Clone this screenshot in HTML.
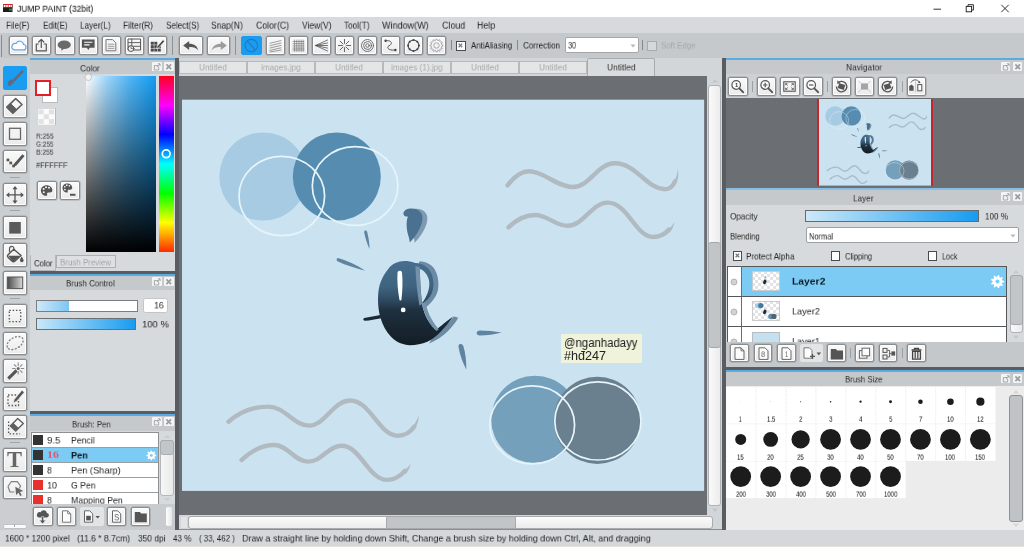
<!DOCTYPE html>
<html><head><meta charset="utf-8"><title>JUMP PAINT (32bit)</title>
<style>

*{box-sizing:border-box;margin:0;padding:0}
html,body{width:1024px;height:547px;overflow:hidden;background:#d7dadc;font-family:"Liberation Sans",sans-serif;font-size:9.6px;color:#222}
.a{position:absolute}
.t{position:absolute;white-space:pre;line-height:1;transform-origin:0 50%;will-change:transform}
.b{background:linear-gradient(#fafafa,#ebebec);border:1px solid #898c8f;border-radius:2px;box-shadow:0 0 0 .6px rgba(125,128,132,.55),inset 0 0 0 1px #fff}
.b svg,.bon svg,.bf svg{display:block}
.bon{background:#1a9df0;border:1px solid #1a9df0;border-radius:2px}
.bf{border:1px solid #e2e4e6;background:#e2e4e6;border-radius:2px}
.sep{position:absolute;width:1px;background:#8f9295}
.pt{position:absolute;background:#c6c9cb;border-top:2px solid #58ace3}
.pb{position:absolute;width:9.5px;height:9.5px;background:#f3f4f5;border-radius:1px}
.pb svg{display:block}
.chk{position:absolute;width:9.5px;height:9.5px;background:#fff;border:1px solid #4a4d50}

</style></head><body>
<div class="a" style="left:0px;top:0px;width:1024px;height:17px;background:#fff"></div>
<svg class="a" style="left:3px;top:4px;" width="9.5" height="8" viewBox="0 0 9.5 8"><rect width="9.5" height="8" fill="#1c1c1c"/><rect width="9.5" height="3.6" fill="#d3222a"/><rect x="0.8" y="1" width="1.6" height="2" fill="#fff"/><rect x="3.2" y="1" width="1.6" height="2" fill="#fff"/><rect x="5.6" y="1" width="1.6" height="2" fill="#fff"/><rect x="7.6" y="1" width="1.2" height="2" fill="#fff"/><rect x="6" y="4.6" width="3" height="2" fill="#1f8a3b"/></svg>
<span class="t" style="left:17.00px;top:4.83px;font-size:9px;color:#000;transform:scale(0.9462,1.0500);">JUMP PAINT (32bit)</span>
<svg class="a" style="left:925px;top:0px;" width="99" height="17" viewBox="0 0 99 17"><g stroke="#1a1a1a" stroke-width="0.9" fill="none"><path d="M8.5 9.2h7.5"/><rect x="41.2" y="6.4" width="5.4" height="5.4"/><path d="M43 6.4v-1.7h5.4v5.4h-1.8"/><path d="M76.3 4.8l7.4 7.4M83.7 4.8l-7.4 7.4"/></g></svg>
<div class="a" style="left:0px;top:17px;width:1024px;height:16px;background:#d7dadd"></div>
<span class="t" style="left:6.25px;top:20.98px;font-size:10px;color:#1e1e1e;transform:scale(0.8082,0.8750);">File(F)</span>
<span class="t" style="left:42.50px;top:20.98px;font-size:10px;color:#1e1e1e;transform:scale(0.8049,0.8750);">Edit(E)</span>
<span class="t" style="left:80.00px;top:20.98px;font-size:10px;color:#1e1e1e;transform:scale(0.8215,0.8750);">Layer(L)</span>
<span class="t" style="left:123.00px;top:20.98px;font-size:10px;color:#1e1e1e;transform:scale(0.8308,0.8750);">Filter(R)</span>
<span class="t" style="left:165.50px;top:20.98px;font-size:10px;color:#1e1e1e;transform:scale(0.8085,0.8750);">Select(S)</span>
<span class="t" style="left:211.25px;top:20.98px;font-size:10px;color:#1e1e1e;transform:scale(0.8523,0.8750);">Snap(N)</span>
<span class="t" style="left:256.00px;top:20.98px;font-size:10px;color:#1e1e1e;transform:scale(0.8734,0.8750);">Color(C)</span>
<span class="t" style="left:301.50px;top:20.98px;font-size:10px;color:#1e1e1e;transform:scale(0.8470,0.8750);">View(V)</span>
<span class="t" style="left:343.50px;top:20.98px;font-size:10px;color:#1e1e1e;transform:scale(0.8193,0.8750);">Tool(T)</span>
<span class="t" style="left:382.25px;top:20.98px;font-size:10px;color:#1e1e1e;transform:scale(0.9047,0.8750);">Window(W)</span>
<span class="t" style="left:441.50px;top:20.98px;font-size:10px;color:#1e1e1e;transform:scale(0.8894,0.8750);">Cloud</span>
<span class="t" style="left:477.25px;top:20.98px;font-size:10px;color:#1e1e1e;transform:scale(0.8869,0.8750);">Help</span>
<div class="a" style="left:0px;top:33px;width:1024px;height:25px;background:#c6c9cc"></div>
<div class="a" style="left:1.2px;top:34.5px;width:1.3px;height:22.5px;background:#8a8d90"></div>
<div class="a b" style="left:8.5px;top:35.7px;width:19.2px;height:19px"><svg width="17.2" height="17" viewBox="0 0 17.2 17"><path d="M4.400 12.900h8.800a2.700 2.700 0 0 0 .3-5.400 3.900 3.900 0 0 0-7.400-1 3.300 3.300 0 0 0-1.700 6.400z" fill="#fff" stroke="#69a7e2" stroke-width="1.200"/></svg></div>
<div class="a b" style="left:32.1px;top:35.7px;width:19.2px;height:19px"><svg width="17.2" height="17" viewBox="0 0 17.2 17"><g fill="none" stroke="#555" stroke-width="1.1" stroke-linecap="round" stroke-linejoin="round"><path d="M5.300 7H3.300v6.800h10V7h-2M8.300 10.400V2.600M5.700 5l2.600-2.600L10.900 5" stroke-width="1.200"/></g></svg></div>
<div class="a b" style="left:55.4px;top:35.7px;width:19.2px;height:19px"><svg width="17.2" height="17" viewBox="0 0 17.2 17"><ellipse cx="8.200" cy="7.700" rx="6.600" ry="4.300" fill="#6a6a6a"/><path d="M5.600 10.800l-.3 3 3.200-2.400z" fill="#6a6a6a"/></svg></div>
<div class="a b" style="left:78.5px;top:35.7px;width:19.2px;height:19px"><svg width="17.2" height="17" viewBox="0 0 17.2 17"><path d="M1.900 2.500h12.700v8.200H9.800L8.300 12.900 6.800 10.700H1.900z" fill="#555"/><path d="M4.200 5.300h8.200M4.200 7.900h5.400" stroke="#fff" stroke-width="1.100"/></svg></div>
<div class="a b" style="left:101.6px;top:35.7px;width:19.2px;height:19px"><svg width="17.2" height="17" viewBox="0 0 17.2 17"><g fill="none" stroke="#555" stroke-width="1.1" stroke-linecap="round" stroke-linejoin="round"><path d="M3.400 2.600h6.200l3.200 3.200v8H3.400z" stroke-width="1" stroke="#777"/><path d="M5.300 7.200h5.600M5.300 9.300h5.600M5.300 11.400h5.600" stroke-width=".8" stroke="#888"/></g></svg></div>
<div class="a b" style="left:124.8px;top:35.7px;width:19.2px;height:19px"><svg width="17.2" height="17" viewBox="0 0 17.2 17"><g fill="none" stroke="#555" stroke-width="1.1" stroke-linecap="round" stroke-linejoin="round"><rect x="2.400" y="2" width="12.200" height="11" stroke-width="1"/><path d="M2.400 5.600h12.200M2.400 9.300h12.200M5.800 2v11" stroke-width=".9"/><circle cx="5" cy="11.600" r="2.900" fill="#f4f4f4" stroke-width="1"/><path d="M5 10v1.600h1.400" stroke-width=".8"/></g></svg></div>
<div class="a b" style="left:148.1px;top:35.7px;width:19.2px;height:19px"><svg width="17.2" height="17" viewBox="0 0 17.2 17"><g fill="#4a4a4a"><rect x="1.800" y="4.800" width="3" height="2.900"/><rect x="5.300" y="4.800" width="3" height="2.900"/><rect x="1.800" y="8.200" width="3" height="2.900"/><rect x="5.300" y="8.200" width="3" height="2.900"/><rect x="8.800" y="8.200" width="3" height="2.900"/><rect x="1.800" y="11.600" width="3" height="2.900"/><rect x="5.300" y="11.600" width="3" height="2.900"/><rect x="8.800" y="11.600" width="3" height="2.900"/></g><path d="M8.200 9.300l5.800-6.600 1.700 1.500-5.800 6.600-2.400.9z" fill="#4a4a4a" stroke="#f4f4f4" stroke-width=".7"/></svg></div>
<div class="sep" style="left:171.6px;top:35.5px;height:19.5px"></div>
<div class="a b" style="left:179px;top:35.7px;width:23.6px;height:19px"><svg width="21.6" height="17" viewBox="0 0 21.6 17"><path d="M3.2 8.6l6-4.6v2.7c5.2 0 8 2.2 9 6.5-2.4-2.7-5-3.3-9-3.1v3z" fill="#555"/></svg></div>
<div class="a b" style="left:206.6px;top:35.7px;width:23.6px;height:19px"><svg width="21.6" height="17" viewBox="0 0 21.6 17"><path d="M18.8 8.6l-6-4.6v2.7c-5.2 0-8 2.2-9 6.5 2.4-2.7 5-3.3 9-3.1v3z" fill="#9a9c9e"/></svg></div>
<div class="sep" style="left:234.8px;top:35.5px;height:19.5px"></div>
<div class="a bon" style="left:241.4px;top:35.7px;width:20.2px;height:19px"><svg width="18.2" height="17" viewBox="0 0 18.2 17"><circle cx="9.3" cy="8.6" r="6.2" fill="none" stroke="#2277c0" stroke-width="1.1"/><path d="M5.2 4l8.4 9.2" stroke="#2277c0" stroke-width="1.1"/></svg></div>
<div class="a b" style="left:265.5px;top:35.7px;width:19.2px;height:19px"><svg width="17.2" height="17" viewBox="0 0 17.2 17"><g fill="none" stroke="#555" stroke-width="1.1" stroke-linecap="round" stroke-linejoin="round"><path d="M3 6.2l11-2.6M3 8.6l11-2.6M3 11l11-2.6M3 13.400l11-2.600M3 15l11-2" stroke-width=".7" stroke="#777"/></g></svg></div>
<div class="a b" style="left:288.6px;top:35.7px;width:19.2px;height:19px"><svg width="17.2" height="17" viewBox="0 0 17.2 17"><g fill="none" stroke="#555" stroke-width="1.1" stroke-linecap="round" stroke-linejoin="round"><path d="M3 4.5h11M3 6.7h11M3 8.9h11M3 11.1h11M3 13h11M4.6 3v11.4M6.8 3v11.4M9 3v11.4M11.2 3v11.4M13.2 3v11.4" stroke-width=".6" stroke="#666"/></g></svg></div>
<div class="a b" style="left:311.5px;top:35.7px;width:19.2px;height:19px"><svg width="17.2" height="17" viewBox="0 0 17.2 17"><g fill="none" stroke="#555" stroke-width="1.1" stroke-linecap="round" stroke-linejoin="round"><path d="M2.6 8.5L14.6 3M2.6 8.5l12-2.6M2.6 8.5h12M2.6 8.5l12 2.6M2.6 8.5l12 5.5" stroke-width=".8"/></g></svg></div>
<div class="a b" style="left:334.6px;top:35.7px;width:19.2px;height:19px"><svg width="17.2" height="17" viewBox="0 0 17.2 17"><g fill="none" stroke="#555" stroke-width="1.1" stroke-linecap="round" stroke-linejoin="round"><path d="M8.5 2.4v4M8.5 10.6v4M2.4 8.5h4M10.6 8.5h4M4.2 4.2L7 7M10 10l2.8 2.8M12.8 4.2L10 7M7 10l-2.8 2.8" stroke-width=".9"/></g></svg></div>
<div class="a b" style="left:357.6px;top:35.7px;width:19.2px;height:19px"><svg width="17.2" height="17" viewBox="0 0 17.2 17"><g fill="none" stroke="#555" stroke-width="1.1" stroke-linecap="round" stroke-linejoin="round"><circle cx="8.5" cy="8.5" r="6" stroke-width=".8"/><circle cx="8.5" cy="8.5" r="3.9" stroke-width=".8"/><circle cx="8.5" cy="8.5" r="1.8" stroke-width=".8"/></g></svg></div>
<div class="a b" style="left:380.7px;top:35.7px;width:19.2px;height:19px"><svg width="17.2" height="17" viewBox="0 0 17.2 17"><g fill="none" stroke="#555" stroke-width="1.1" stroke-linecap="round" stroke-linejoin="round"><path d="M3.6 3.8c7-1 7 3.4 3.4 5-3 1.6-.5 5.2 6.4 4.2" stroke-width="1"/></g><circle cx="3.6" cy="3.8" r="1.2" fill="#444"/><circle cx="13.4" cy="13" r="1.2" fill="#444"/></svg></div>
<div class="a b" style="left:403.9px;top:35.7px;width:19.2px;height:19px"><svg width="17.2" height="17" viewBox="0 0 17.2 17"><g fill="none" stroke="#555" stroke-width="1.1" stroke-linecap="round" stroke-linejoin="round"><circle cx="8.5" cy="8.5" r="5.4" stroke-width="1.2"/></g><circle cx="13.9" cy="8.5" r="1" fill="#444"/><circle cx="12.3" cy="12.3" r="1" fill="#444"/><circle cx="8.5" cy="13.9" r="1" fill="#444"/><circle cx="4.7" cy="12.3" r="1" fill="#444"/><circle cx="3.1" cy="8.5" r="1" fill="#444"/><circle cx="4.7" cy="4.7" r="1" fill="#444"/><circle cx="8.5" cy="3.1" r="1" fill="#444"/><circle cx="12.3" cy="4.7" r="1" fill="#444"/></svg></div>
<div class="a b" style="left:427.2px;top:35.7px;width:19.2px;height:19px"><svg width="17.2" height="17" viewBox="0 0 17.2 17"><polygon points="14.89,8.08 14.89,8.92 13.52,9.50 13.35,10.15 14.24,11.33 13.82,12.06 12.35,11.88 11.88,12.35 12.06,13.82 11.33,14.24 10.15,13.35 9.50,13.52 8.92,14.89 8.08,14.89 7.50,13.52 6.85,13.35 5.67,14.24 4.94,13.82 5.12,12.35 4.65,11.88 3.18,12.06 2.76,11.33 3.65,10.15 3.48,9.50 2.11,8.92 2.11,8.08 3.48,7.50 3.65,6.85 2.76,5.67 3.18,4.94 4.65,5.12 5.12,4.65 4.94,3.18 5.67,2.76 6.85,3.65 7.50,3.48 8.08,2.11 8.92,2.11 9.50,3.48 10.15,3.65 11.33,2.76 12.06,3.18 11.88,4.65 12.35,5.12 13.82,4.94 14.24,5.67 13.35,6.85 13.52,7.50" fill="none" stroke="#9c9ea0" stroke-width=".9" stroke-linejoin="round"/><circle cx="8.5" cy="8.5" r="2.688" fill="none" stroke="#9c9ea0" stroke-width=".9"/></svg></div>
<div class="sep" style="left:451px;top:40.300px;height:9.500px;background:#85888b"></div>
<div class="chk" style="left:456px;top:41px"></div>
<svg class="a" style="left:456px;top:41px;" width="9.5" height="9.5" viewBox="0 0 9.5 9.5"><path d="M2.600 2.600l3.600 3.600M6.200 2.600L2.600 6.200" stroke="#777" stroke-width="1.300"/></svg>
<span class="t" style="left:470.60px;top:41.43px;font-size:10px;color:#222;transform:scale(0.7883,0.8250);">AntiAliasing</span>
<div class="sep" style="left:516.6px;top:40.300px;height:9.500px;background:#85888b"></div>
<span class="t" style="left:522.90px;top:41.43px;font-size:10px;color:#222;transform:scale(0.8041,0.8250);">Correction</span>
<div class="a" style="left:565.4px;top:36.8px;width:73.2px;height:16px;background:#fff;border:1px solid #a4a7aa;border-radius:2px"></div>
<span class="t" style="left:568.20px;top:41.23px;font-size:10px;color:#222;transform:scale(0.7371,0.8250);">30</span>
<svg class="a" style="left:629.5px;top:43.5px;" width="6" height="4" viewBox="0 0 6 4"><path d="M0.500.5h5L3 3.500z" fill="#b5b7b9"/></svg>
<div class="sep" style="left:641.5px;top:40.300px;height:9.500px;background:#85888b"></div>
<div class="chk" style="left:647.4px;top:41px;border-color:#a8abad;background:#d6d9db"></div>
<span class="t" style="left:661.20px;top:41.43px;font-size:10px;color:#a6a9ab;transform:scale(0.7878,0.8250);">Soft Edge</span>
<div class="a" style="left:0px;top:57.8px;width:29.6px;height:1.2px;background:#85888b"></div>
<div class="a" style="left:0px;top:530px;width:1024px;height:17px;background:#d5d8da"></div>
<div class="a" style="left:0px;top:545.6px;width:1024px;height:1.4px;background:#e6e2da"></div>
<span class="t" style="left:5.00px;top:534.43px;font-size:10px;color:#222;transform:scale(0.8370,0.8250);">1600 * 1200 pixel</span>
<span class="t" style="left:77.00px;top:534.43px;font-size:10px;color:#222;transform:scale(0.8556,0.8250);">(11.6 * 8.7cm)</span>
<span class="t" style="left:137.80px;top:534.43px;font-size:10px;color:#222;transform:scale(0.8381,0.8250);">350 dpi</span>
<span class="t" style="left:173.30px;top:534.43px;font-size:10px;color:#222;transform:scale(0.8027,0.8250);">43 %</span>
<span class="t" style="left:199.20px;top:534.43px;font-size:10px;color:#222;transform:scale(0.7852,0.8250);">( 33, 462 )</span>
<span class="t" style="left:242.40px;top:534.43px;font-size:10px;color:#222;transform:scale(0.8988,0.8250);">Draw a straight line by holding down Shift, Change a brush size by holding down Ctrl, Alt, and dragging</span>
<div class="a" style="left:0px;top:58px;width:30px;height:472px;background:#cbced1"></div>
<div class="a bon" style="left:2.8px;top:66.3px;width:24px;height:23.6px"><svg width="22" height="21.6" viewBox="0 0 22 21.6"><path d="M18.200 4.600L10 13.400" stroke="#5d6b80" stroke-width="2.500" stroke-linecap="round"/><ellipse cx="6.800" cy="15.500" rx="3.300" ry="2.300" transform="rotate(-38 6.800 15.500)" fill="#5d6b80"/><path d="M3.400 18.400c1.300-.2 2-1 2.400-2l1.500 1.600c-1.100.8-2.400 1-3.900.4z" fill="#5d6b80"/></svg></div>
<div class="a b" style="left:2.8px;top:94.5px;width:24px;height:23.6px"><svg width="22" height="21.6" viewBox="0 0 22 21.6"><path d="M11.700 2.700L18 8.500 8.900 17.200 2.800 11.200z" fill="#f8f8f8" stroke="#5f5f5f" stroke-width="1.600" stroke-linejoin="round"/><path d="M2.800 11.200L6.500 7.600 12.700 13.500 8.900 17.200z" fill="#5f5f5f" stroke="#5f5f5f" stroke-width="1" stroke-linejoin="round"/></svg></div>
<div class="a b" style="left:2.8px;top:122.4px;width:24px;height:23.6px"><svg width="22" height="21.6" viewBox="0 0 22 21.6"><rect x="5.500" y="5.300" width="11" height="11" fill="#f2f2f2" stroke="#666" stroke-width="1.300"/></svg></div>
<div class="a b" style="left:2.8px;top:149.8px;width:24px;height:23.6px"><svg width="22" height="21.6" viewBox="0 0 22 21.6"><path d="M18.400 3.200l2.200 1.900-8.200 9.500-3.400 1.400 1.200-3.400z" fill="#555"/><g fill="#555"><rect x="2.600" y="7.600" width="2.700" height="2.700"/><rect x="5.400" y="10.600" width="2.700" height="2.700"/><rect x="8.200" y="13.600" width="2.700" height="2.700"/></g></svg></div>
<div class="a b" style="left:2.8px;top:182.8px;width:24px;height:23.6px"><svg width="22" height="21.6" viewBox="0 0 22 21.6"><g stroke="#555" stroke-width="1.300" fill="none"><path d="M11 3.500v14.800M3.600 10.900h14.800"/></g><g fill="#555"><path d="M11 2l2.600 3.200H8.400zM11 19.800l2.600-3.200H8.400zM2.100 10.900l3.200-2.600v5.200zM19.900 10.900l-3.200-2.600v5.200z"/></g></svg></div>
<div class="a b" style="left:2.8px;top:215.6px;width:24px;height:23.6px"><svg width="22" height="21.6" viewBox="0 0 22 21.6"><rect x="5.200" y="5" width="11.600" height="11.600" fill="#5a5a5a"/></svg></div>
<div class="a b" style="left:2.8px;top:243.3px;width:24px;height:23.6px"><svg width="22" height="21.6" viewBox="0 0 22 21.6"><path d="M9.800 5.200l7.200 6.300-6 5.500c-1 .9-2.200.9-3.100 0L4.200 13.400c-.8-.8-.8-2 .1-2.900z" fill="none" stroke="#555" stroke-width="1.400"/><path d="M4.300 11.800h12l-5.600 5c-.9.800-1.900.8-2.700 0z" fill="#555"/><path d="M9.900 6.500V4.600c0-1.500-1-2.300-2.200-2.300S5.500 3.200 5.500 4.700v3.200" fill="none" stroke="#555" stroke-width="1.200"/><path d="M17.600 12.400c1.400 2 2 3 2 4a1.800 1.800 0 0 1-3.600 0c0-1 .5-2.200 1.600-4z" fill="#555"/></svg></div>
<div class="a b" style="left:2.8px;top:271.4px;width:24px;height:23.6px"><svg width="22" height="21.6" viewBox="0 0 22 21.6"><defs><linearGradient id="tg" x1="0" x2="1"><stop offset="0" stop-color="#4a4a4a"/><stop offset="1" stop-color="#d8d8d8"/></linearGradient></defs><rect x="3.300" y="5" width="15.400" height="11.600" fill="url(#tg)" stroke="#555" stroke-width="1"/></svg></div>
<div class="a b" style="left:2.8px;top:304.2px;width:24px;height:23.6px"><svg width="22" height="21.6" viewBox="0 0 22 21.6"><rect x="5.300" y="5.300" width="11.400" height="11.400" fill="none" stroke="#555" stroke-width="1.300" stroke-dasharray="1.500 1.800"/></svg></div>
<div class="a b" style="left:2.8px;top:331.8px;width:24px;height:23.6px"><svg width="22" height="21.6" viewBox="0 0 22 21.6"><path d="M3.600 14.500C1.500 10 7 4.500 13.500 3.600c5.500-.7 7 3.500 4.500 7.400-3 4.600-12.500 8-14.400 3.500z" fill="none" stroke="#7d7d7d" stroke-width="1.300" stroke-dasharray="2 1.500"/></svg></div>
<div class="a b" style="left:2.8px;top:359.4px;width:24px;height:23.6px"><svg width="22" height="21.6" viewBox="0 0 22 21.6"><path d="M3.200 17.600l8.300-8.300 2.200 2.200-8.300 8.300z" fill="#555"/><g stroke="#8a8a8a" stroke-width="1.100"><path d="M14.200 2.600v3.400M14.200 11V14.400M8.200 8.500h3.400M16.800 8.500h3.400M10 4.300l2.400 2.400M16 10.300l2.400 2.400M18.400 4.300L16 6.700"/></g><circle cx="14.200" cy="8.500" r="1.500" fill="#666"/></svg></div>
<div class="a b" style="left:2.8px;top:387.2px;width:24px;height:23.6px"><svg width="22" height="21.6" viewBox="0 0 22 21.6"><rect x="4" y="7" width="10.500" height="10.500" fill="none" stroke="#555" stroke-width="1.300" stroke-dasharray="1.500 1.800"/><path d="M18 2.200l2.300 2-7.800 9.200-3.400 1.400 1.200-3.400z" fill="#555" stroke="#f4f4f4" stroke-width=".6"/></svg></div>
<div class="a b" style="left:2.8px;top:415px;width:24px;height:23.6px"><svg width="22" height="21.6" viewBox="0 0 22 21.6"><path d="M4.600 5.500v12.300h11.500" fill="none" stroke="#555" stroke-width="1.300" stroke-dasharray="1.500 1.800"/><path d="M13.700 2.600l5.600 5-7.600 7.400-5.400-5z" fill="#f8f8f8" stroke="#5f5f5f" stroke-width="1.400" stroke-linejoin="round"/><path d="M6.300 10l3.100-3 5.400 5-3.100 3z" fill="#5f5f5f"/></svg></div>
<div class="a b" style="left:2.8px;top:448px;width:24px;height:23.6px"><svg width="22" height="21.6" viewBox="0 0 22 21.6"></svg></div>
<span class="t" style="left:7.29px;top:449.10px;font-size:22.5px;color:#666;font-weight:700;font-family:'Liberation Serif',serif;">T</span>
<div class="a b" style="left:2.8px;top:475.8px;width:24px;height:23.6px"><svg width="22" height="21.6" viewBox="0 0 22 21.6"><path d="M4 9.500l3.300-5 6 .2 3.200 4.200-1.200 2.600" fill="none" stroke="#808080" stroke-width="1.200" stroke-linejoin="round"/><path d="M4 9.500l2 5.500h4.500" fill="none" stroke="#808080" stroke-width="1.200" stroke-linejoin="round"/><path d="M11.300 9.800l8 4.200-3.300.9 1.700 3.300-1.500.8-1.700-3.300-2.400 2.300z" fill="#666"/></svg></div>
<div class="a" style="left:10px;top:176.7px;width:10px;height:1.2px;background:#a3a6a8"></div>
<div class="a" style="left:10px;top:209.7px;width:10px;height:1.2px;background:#a3a6a8"></div>
<div class="a" style="left:10px;top:297.6px;width:10px;height:1.2px;background:#a3a6a8"></div>
<div class="a" style="left:10px;top:441.7px;width:10px;height:1.2px;background:#a3a6a8"></div>
<div class="a" style="left:2.6px;top:523.6px;width:24px;height:5px;background:#fafafa;border-radius:2px;border:1px solid #c0c3c5"></div>
<div class="a" style="left:14px;top:524.4px;width:1px;height:3px;background:#a9acae"></div>
<div class="a" style="left:29.6px;top:58px;width:145.7px;height:214px;background:#d7dadc"></div>
<div class="pt" style="left:29.6px;top:58.3px;width:145.7px;height:15.6px"></div><span class="t" style="left:80.20px;top:63.50px;font-size:10px;color:#2b2b2b;transform:scale(0.8282,0.8000);">Color</span><div class="pb" style="left:152px;top:61.6px"><svg width="9.500" height="9.500" viewBox="0 0 9.500 9.500"><path d="M6.300 3.600H2.300v4.400h4.400V4.800M5 5.200l2.800-3M5.800 1.800h2.300v2.300" fill="none" stroke="#9a9d9f" stroke-width=".9"/></svg></div><div class="pb" style="left:164px;top:61.6px"><svg width="9.500" height="9.500" viewBox="0 0 9.500 9.500"><path d="M2.400 2.400l4.700 4.700M7.100 2.400L2.400 7.100" fill="none" stroke="#9a9d9f" stroke-width="1.700"/></svg></div>
<div class="a" style="left:42.3px;top:87px;width:15.4px;height:15.6px;background:#fff;border:1px solid #b9bcbe"></div>
<div class="a" style="left:35.2px;top:80.2px;width:16px;height:15.6px;background:#fff;border:2.200px solid #e61e27"></div>
<svg class="a" style="left:37.4px;top:108px;" width="18.6" height="17.4" viewBox="0 0 18.6 17.4"><rect width="18.600" height="17.400" fill="#fbfbfb" stroke="#b3b6b8" stroke-width="1"/><g fill="#e0e1e2"><rect x="1.500" y="1.500" width="5.200" height="4.800"/><rect x="11.900" y="1.500" width="5.200" height="4.800"/><rect x="6.700" y="6.300" width="5.200" height="4.800"/><rect x="1.500" y="11.100" width="5.200" height="4.800"/><rect x="11.900" y="11.100" width="5.200" height="4.800"/></g></svg>
<span class="t" style="left:35.70px;top:131.52px;font-size:9px;color:#333;transform:scale(0.7324,0.8333);">R:255</span>
<span class="t" style="left:35.70px;top:139.62px;font-size:9px;color:#333;transform:scale(0.7175,0.8333);">G:255</span>
<span class="t" style="left:35.70px;top:147.72px;font-size:9px;color:#333;transform:scale(0.7479,0.8333);">B:255</span>
<span class="t" style="left:35.70px;top:161.36px;font-size:9px;color:#333;transform:scale(0.8316,0.9167);">#FFFFFF</span>
<div class="a b" style="left:37.3px;top:181.2px;width:19.4px;height:19.2px"><svg width="17.4" height="17.2" viewBox="0 0 17.4 17.2"><path d="M8.600 3.200c-3.300 0-5.700 2.400-5.700 5.300 0 3 2.400 5.300 5.200 5.300 1 0 1.300-.6 1-1.300-.5-1.200.2-2 1.300-2h1.500c1.600 0 2.500-1 2.500-2.300 0-2.800-2.600-5-5.800-5z" fill="#555"/><g fill="#f4f4f4"><circle cx="5.600" cy="7" r="1"/><circle cx="8" cy="5.200" r="1"/><circle cx="11" cy="5.800" r="1"/><circle cx="5.800" cy="10.300" r="1"/></g></svg></div>
<div class="a b" style="left:60.2px;top:181.2px;width:19.4px;height:19.2px"><svg width="17.4" height="17.2" viewBox="0 0 17.4 17.2"><g transform="translate(-1,-1.200) scale(.85)"><path d="M8.600 3.200c-3.300 0-5.700 2.400-5.700 5.300 0 3 2.400 5.300 5.200 5.300 1 0 1.300-.6 1-1.300-.5-1.200.2-2 1.300-2h1.500c1.600 0 2.500-1 2.500-2.300 0-2.800-2.600-5-5.800-5z" fill="#555"/><g fill="#f4f4f4"><circle cx="5.600" cy="7" r="1"/><circle cx="8" cy="5.200" r="1"/><circle cx="11" cy="5.800" r="1"/><circle cx="5.800" cy="10.300" r="1"/></g></g><rect x="9" y="11.800" width="5.500" height="2" fill="#555"/></svg></div>
<div class="a" style="left:86.1px;top:75.8px;width:69.6px;height:176.5px;background:linear-gradient(to bottom,rgba(0,0,0,0),#000),linear-gradient(to right,#fff 0%,#9dd6fb 30%,#52b6f6 62%,#129bf3 100%)"></div>
<div class="a" style="left:159.1px;top:75.8px;width:14.9px;height:176.5px;background:linear-gradient(to bottom,#ff0020 0%,#ff00ff 16.700%,#0000ff 33.300%,#00ffff 50%,#00ff00 66.700%,#ffff00 83.300%,#ff2a00 100%)"></div>
<svg class="a" style="left:159.1px;top:147px;" width="15" height="14" viewBox="0 0 15 14"><circle cx="7.200" cy="6.800" r="3.900" fill="none" stroke="#fff" stroke-width="1.700"/></svg>
<svg class="a" style="left:83.5px;top:73px;" width="9" height="9" viewBox="0 0 9 9"><circle cx="4.300" cy="4.200" r="3.300" fill="#f4f4f4" stroke="#b9bcbe" stroke-width=".8"/></svg>
<div class="a" style="left:56.2px;top:254.6px;width:59.4px;height:13.8px;background:#dddfe1;border:1px solid #adb0b2"></div>
<div class="a" style="left:29.6px;top:254.6px;width:26.8px;height:16.4px;background:#d7dadc;border:1px solid #b4b7b9;border-top:none"></div>
<span class="t" style="left:33.60px;top:258.70px;font-size:10px;color:#222;transform:scale(0.7780,0.8000);">Color</span>
<span class="t" style="left:60.00px;top:258.20px;font-size:10px;color:#a3a6a8;transform:scale(0.7911,0.8000);">Brush Preview</span>
<div class="a" style="left:29.6px;top:271.3px;width:145.7px;height:2.4px;background:#595c60"></div>
<div class="a" style="left:29.6px;top:273.6px;width:145.7px;height:138px;background:#d7dadc"></div>
<div class="pt" style="left:29.6px;top:273.6px;width:145.7px;height:16.2px"></div><span class="t" style="left:66.40px;top:279.10px;font-size:10px;color:#2b2b2b;transform:scale(0.7965,0.8000);">Brush Control</span><div class="pb" style="left:152px;top:276.9px"><svg width="9.500" height="9.500" viewBox="0 0 9.500 9.500"><path d="M6.300 3.600H2.300v4.400h4.400V4.800M5 5.200l2.800-3M5.800 1.800h2.300v2.300" fill="none" stroke="#9a9d9f" stroke-width=".9"/></svg></div><div class="pb" style="left:164px;top:276.9px"><svg width="9.500" height="9.500" viewBox="0 0 9.500 9.500"><path d="M2.400 2.400l4.700 4.700M7.100 2.400L2.400 7.100" fill="none" stroke="#9a9d9f" stroke-width="1.700"/></svg></div>
<div class="a" style="left:36px;top:299.8px;width:102px;height:12px;background:#fff;border:1px solid #7b7e81"></div>
<div class="a" style="left:37px;top:300.8px;width:31.6px;height:10px;background:linear-gradient(to right,#cfe9f9,#7cc6f4)"></div>
<div class="a" style="left:142.7px;top:297.7px;width:25.7px;height:15.4px;background:#fff;border:1px solid #c3c6c8;border-radius:2.500px"></div>
<span class="t" style="left:153.80px;top:301.40px;font-size:10px;color:#222;transform:scale(0.8809,0.8000);">16</span>
<div class="a" style="left:36px;top:318.4px;width:100.2px;height:12px;background:linear-gradient(to right,#c9e7f9,#189cf0);border:1px solid #6d7073"></div>
<span class="t" style="left:141.50px;top:319.80px;font-size:10px;color:#222;transform:scale(0.9485,0.8000);">100 %</span>
<div class="a" style="left:29.6px;top:411.3px;width:145.7px;height:2.4px;background:#595c60"></div>
<div class="a" style="left:29.6px;top:413.6px;width:145.7px;height:117px;background:#d7dadc"></div>
<div class="pt" style="left:29.6px;top:413.6px;width:145.7px;height:17.6px"></div><span class="t" style="left:71.70px;top:419.80px;font-size:10px;color:#2b2b2b;transform:scale(0.7821,0.8000);">Brush: Pen</span><div class="pb" style="left:152px;top:416.9px"><svg width="9.500" height="9.500" viewBox="0 0 9.500 9.500"><path d="M6.300 3.600H2.300v4.400h4.400V4.800M5 5.200l2.800-3M5.800 1.800h2.300v2.300" fill="none" stroke="#9a9d9f" stroke-width=".9"/></svg></div><div class="pb" style="left:164px;top:416.9px"><svg width="9.500" height="9.500" viewBox="0 0 9.500 9.500"><path d="M2.400 2.400l4.700 4.700M7.100 2.400L2.400 7.100" fill="none" stroke="#9a9d9f" stroke-width="1.700"/></svg></div>
<div class="a" style="left:31.3px;top:432px;width:127.6px;height:72.4px;background:#fff;border:1px solid #8d9093;border-bottom:none"></div>
<div class="a" style="left:33px;top:434.9px;width:10px;height:10px;background:#333"></div>
<span class="t" style="left:47.10px;top:435.82px;font-size:10px;color:#222;transform:scale(0.9708,0.8250);">9.5</span>
<span class="t" style="left:71.20px;top:435.82px;font-size:10px;color:#222;transform:scale(0.8697,0.8250);">Pencil</span>
<div class="a" style="left:32.3px;top:447.25px;width:125.6px;height:14.95px;background:#7ccbf5"></div>
<div class="a" style="left:32.3px;top:446.75px;width:125.6px;height:1px;background:#9b9ea1"></div>
<div class="a" style="left:33px;top:449.85px;width:10px;height:10px;background:#333"></div>
<span class="t" style="left:47.10px;top:450.40px;font-size:10.4px;color:#e2506c;font-weight:700;font-family:'Liberation Serif',serif;transform:scale(1.1356,0.9286);">16</span>
<span class="t" style="left:71.20px;top:450.77px;font-size:10px;color:#111;font-weight:700;transform:scale(0.9104,0.8250);">Pen</span>
<div class="a" style="left:32.3px;top:461.7px;width:125.6px;height:1px;background:#9b9ea1"></div>
<div class="a" style="left:33px;top:464.8px;width:10px;height:10px;background:#333"></div>
<span class="t" style="left:47.10px;top:465.72px;font-size:10px;color:#222;transform:scale(0.8629,0.8250);">8</span>
<span class="t" style="left:71.20px;top:465.72px;font-size:10px;color:#222;transform:scale(0.9217,0.8250);">Pen (Sharp)</span>
<div class="a" style="left:32.3px;top:476.65px;width:125.6px;height:1px;background:#9b9ea1"></div>
<div class="a" style="left:33px;top:479.75px;width:10px;height:10px;background:#e8312c"></div>
<span class="t" style="left:47.10px;top:480.67px;font-size:10px;color:#222;transform:scale(0.8989,0.8250);">10</span>
<span class="t" style="left:71.20px;top:480.67px;font-size:10px;color:#222;transform:scale(0.8674,0.8250);">G Pen</span>
<div class="a" style="left:32.3px;top:491.6px;width:125.6px;height:1px;background:#9b9ea1"></div>
<div class="a" style="left:33px;top:494.7px;width:10px;height:10px;background:#e8312c"></div>
<span class="t" style="left:47.10px;top:495.62px;font-size:10px;color:#222;transform:scale(0.8629,0.8250);">8</span>
<span class="t" style="left:71.20px;top:495.62px;font-size:10px;color:#222;transform:scale(0.8789,0.8250);">Mapping Pen</span>
<svg class="a" style="left:145px;top:449px;" width="13" height="13" viewBox="0 0 13 13"><polygon points="11.18,5.92 11.18,6.88 9.68,7.42 9.41,8.06 10.09,9.51 9.41,10.19 7.96,9.51 7.32,9.78 6.78,11.28 5.82,11.28 5.28,9.78 4.64,9.51 3.19,10.19 2.51,9.51 3.19,8.06 2.92,7.42 1.42,6.88 1.42,5.92 2.92,5.38 3.19,4.74 2.51,3.29 3.19,2.61 4.64,3.29 5.28,3.02 5.82,1.52 6.78,1.52 7.32,3.02 7.96,3.29 9.41,2.61 10.09,3.29 9.41,4.74 9.68,5.38" fill="#fff"/><circle cx="6.3" cy="6.4" r="1.47" fill="#7ccbf5"/></svg>
<div class="a" style="left:29.6px;top:504.2px;width:145.7px;height:25.8px;background:#c9cccf"></div>
<div class="a" style="left:159.6px;top:440.2px;width:14px;height:55.4px;background:linear-gradient(to right,#f7f7f7,#e9eaeb);border:1px solid #b4b7b9;border-radius:3px"></div>
<div class="a" style="left:159.6px;top:440.2px;width:14px;height:15px;background:#c3c6c9;border:1px solid #a9acae;border-radius:3px"></div>
<svg class="a" style="left:162.6px;top:434px;" width="8" height="5" viewBox="0 0 8 5"><path d="M1 4l3-3 3 3z" fill="#c9cccf"/></svg>
<svg class="a" style="left:162.6px;top:497px;" width="8" height="5" viewBox="0 0 8 5"><path d="M1 1l3 3 3-3z" fill="#c9cccf"/></svg>
<div class="a b" style="left:33.4px;top:507.4px;width:19.2px;height:18.4px"><svg width="17.2" height="16.4" viewBox="0 0 17.2 16.4"><path d="M4.800 9.400h7.800a2.200 2.200 0 0 0 .3-4.400 3.300 3.300 0 0 0-6.300-.8 2.700 2.700 0 0 0-1.800 5.200z" fill="#555"/><path d="M7.600 8.500h2v3.800h2.200l-3.200 3.400-3.200-3.400h2.200z" fill="#555" stroke="#f0f0f0" stroke-width=".5"/></svg></div>
<div class="a b" style="left:57px;top:507.4px;width:19.2px;height:18.4px"><svg width="17.2" height="16.4" viewBox="0 0 17.2 16.4"><path d="M4.500 2.800h5.200l3 3v8.400H4.500z" fill="#fcfcfc" stroke="#777" stroke-width="1"/><path d="M9.700 2.800v3h3" fill="none" stroke="#777" stroke-width=".9"/></svg></div>
<div class="a bf" style="left:80px;top:507.4px;width:23.8px;height:18.4px"><svg width="21.8" height="16.4" viewBox="0 0 21.8 16.4"><path d="M3.500 2.800h5.200l3 3v8.400H3.500z" fill="#fcfcfc" stroke="#666" stroke-width="1"/><rect x="5.200" y="7.800" width="4.600" height="4.600" fill="#555"/><path d="M14.500 8h4.400l-2.200 2.600z" fill="#555"/></svg></div>
<div class="a b" style="left:107.1px;top:507.4px;width:19.2px;height:18.4px"><svg width="17.2" height="16.4" viewBox="0 0 17.2 16.4"><path d="M4.500 2.800h5.200l3 3v8.400H4.500z" fill="#fcfcfc" stroke="#666" stroke-width="1"/></svg></div>
<span class="t" style="left:113.80px;top:512.57px;font-size:10px;color:#555;transform:scale(0.7794,0.7750);">S</span>
<div class="a b" style="left:130.6px;top:507.4px;width:19.2px;height:18.4px"><svg width="17.2" height="16.4" viewBox="0 0 17.2 16.4"><path d="M2.800 4h5l1.400 1.600h5.600v8.600H2.800z" fill="#555"/></svg></div>
<div class="a" style="left:166.2px;top:507px;width:6px;height:19px;background:linear-gradient(to right,#fdfdfd,#e4e6e7);border-radius:2px"></div>
<div class="a" style="left:175.3px;top:58px;width:3.5px;height:472px;background:#595c60"></div>
<div class="a" style="left:178.8px;top:58px;width:544px;height:18px;background:#d3d6d8"></div>
<div class="a" style="left:179px;top:61px;width:68.4px;height:13.4px;background:#e3e5e6;border:1px solid #b7babc"></div>
<span class="t" style="left:199.20px;top:63.30px;font-size:10px;color:#a6a9ab;transform:scale(0.8258,0.8000);">Untitled</span>
<div class="a" style="left:247px;top:61px;width:68.4px;height:13.4px;background:#e3e5e6;border:1px solid #b7babc"></div>
<span class="t" style="left:261.35px;top:63.30px;font-size:10px;color:#a6a9ab;transform:scale(0.8209,0.8000);">images.jpg</span>
<div class="a" style="left:315px;top:61px;width:68.4px;height:13.4px;background:#e3e5e6;border:1px solid #b7babc"></div>
<span class="t" style="left:335.20px;top:63.30px;font-size:10px;color:#a6a9ab;transform:scale(0.8258,0.8000);">Untitled</span>
<div class="a" style="left:383px;top:61px;width:68.4px;height:13.4px;background:#e3e5e6;border:1px solid #b7babc"></div>
<span class="t" style="left:391.35px;top:63.30px;font-size:10px;color:#a6a9ab;transform:scale(0.8160,0.8000);">images (1).jpg</span>
<div class="a" style="left:451px;top:61px;width:68.4px;height:13.4px;background:#e3e5e6;border:1px solid #b7babc"></div>
<span class="t" style="left:471.20px;top:63.30px;font-size:10px;color:#a6a9ab;transform:scale(0.8258,0.8000);">Untitled</span>
<div class="a" style="left:519px;top:61px;width:68.4px;height:13.4px;background:#e3e5e6;border:1px solid #b7babc"></div>
<span class="t" style="left:539.20px;top:63.30px;font-size:10px;color:#a6a9ab;transform:scale(0.8258,0.8000);">Untitled</span>
<div class="a" style="left:587px;top:57.6px;width:68px;height:18.4px;background:#d9dcde;border:1px solid #a9acae;border-bottom:none;border-radius:2px 2px 0 0"></div>
<span class="t" style="left:606.70px;top:63.40px;font-size:10px;color:#333;transform:scale(0.8435,0.8000);">Untitled</span>
<div class="a" style="left:178.8px;top:76px;width:528.2px;height:439.2px;background:#6b6e72"></div>
<svg class="a" style="left:0;top:0" width="1024" height="547" viewBox="0 0 1024 547"><defs><symbol id="art" viewBox="182 99.400 522.400 391.500" preserveAspectRatio="none">
<rect x="182" y="99.400" width="522.400" height="391.500" fill="#cbe3f0"/>
<circle cx="263.300" cy="176.500" r="44" fill="#a6cbe2"/>
<circle cx="336.800" cy="176.500" r="44" fill="#568cb0"/>
<g fill="none" stroke="#e6f4fb" style="stroke-width:var(--rw,1.700)">
<ellipse cx="281.800" cy="196" rx="42.800" ry="39.600"/>
<ellipse cx="355.100" cy="186" rx="42.800" ry="39.400"/>
</g>
<g fill="none" style="stroke:var(--wc,#b2bac1);stroke-width:var(--sw,4.400)" stroke-linecap="round" stroke-linejoin="round">
<path d="M507.500 185.300C514 177 521 171.300 529 171.300c15 0 28 15.700 44 15.700 17 0 24-23.700 42-23.700 21 0 32 25.900 50 25.900 5 0 8.500-4 10-8"/>
<path d="M508.500 227.400C516 220 525 215 535.300 215c12 0 20 10.800 32.400 10.800 16 0 24-23.200 40-23.200 20 0 28 34.400 45.200 34.400 7 0 13-4 16-7.500"/>
<path d="M228.500 421.700C240 412 254 406.600 268.200 406.600c17 0 25 19 41 19 16 0 24-25.100 41-25.100 20 0 29 35.200 47.500 35.200 7 0 13-4 16.500-9"/>
<path d="M241.500 460.100C251 451 263 445 274.700 445c13 0 20 16.600 33.400 16.600 14 0 20-15.800 33.500-15.800 19 0 27 34.100 45.300 34.100 8 0 14-4.500 18-9"/>
</g>
<g fill="#b2bac1">
<path d="M673.800 181.500c2.500-4 3.600-8 4-12.600 1.200 6 .4 11.500-2 15z"/>
<path d="M666.500 230.500c3.500-2.300 6-5 8-8.800-.8 5.500-3 9-6 11.800z"/>
<path d="M411.700 427.500c3.200-3.800 5.500-7.500 7.200-12.500-.3 6.500-2 11.300-5 15z"/>
<path d="M403 471.300c3.300-2.200 5.800-4.700 7.700-7.900-.8 4.800-2.800 8.200-5.600 11z"/>
</g>
<!-- feather -->
<path id="fth" transform="translate(4.900,.3)" d="M403.400 213.800C403.200 211.600 405.500 209.500 408.500 208.800C413 207.800 418 209 420.800 212.600C423 215.600 422.800 220 421.500 224C419.300 230.700 415 237 409.800 242.500C409.500 238.500 408.200 235.500 407.400 232.300C406.600 228.500 406.400 224.500 406.800 221.100C407 219.500 407.400 217.800 407.900 216.400C406.800 216.600 405.600 216.400 404.600 215.900C403.900 215.400 403.500 214.600 403.400 213.800Z" fill="#7d9ab2"/>
<path d="M403.400 213.800C403.200 211.600 405.500 209.500 408.500 208.800C413 207.800 418 209 420.800 212.600C423 215.600 422.800 220 421.500 224C419.300 230.700 415 237 409.800 242.500C409.500 238.500 408.200 235.500 407.400 232.300C406.600 228.500 406.400 224.500 406.800 221.100C407 219.500 407.400 217.800 407.900 216.400C406.800 216.600 405.600 216.400 404.600 215.900C403.900 215.400 403.500 214.600 403.400 213.800Z" fill="#4a7190"/>
<!-- dashes -->
<path d="M364.200 232.200c-.2-1.700 2.300-2.300 2.900-.4 1.400 5.200 2.300 11.200 2.500 17.500-2.400-5.400-4.500-11.500-5.400-17.100z" fill="#5f84a1"/>
<path d="M337.600 258.100c-1.500.7-1.300 2.700.3 3.400 8 3.600 17.800 7 27.300 9.200-7.800-5-18-10.100-27.600-12.600z" fill="#5f84a1"/>
<path transform="translate(0,.9)" d="M476.600 332.200c0-1.700 1.400-2.700 3.400-2.700 7 0 14.500.9 21.600 2.200-7 1.800-14.600 3-21.800 3-1.800 0-3.200-.9-3.200-2.500z" fill="#5f84a1"/>
<path d="M459.200 344.500c1.600-1.100 3.500-.3 4.100 1.500 2.300 7.300 3.200 15.400 3 23.700-3.700-7.200-6.500-15-7.800-22.600-.2-1 .1-2.100.7-2.600z" fill="#5f84a1"/>
<!-- body -->
<defs><linearGradient id="bg1" gradientUnits="userSpaceOnUse" x1="0" y1="261" x2="0" y2="346"><stop offset="0" stop-color="#466e8d"/><stop offset=".3" stop-color="#3f6481"/><stop offset=".45" stop-color="#304c63"/><stop offset=".58" stop-color="#1f303f"/><stop offset="1" stop-color="#131c25"/></linearGradient></defs>
<path d="M429 343.500C438 340 446.500 333.500 452.500 326C455 323 457 320 458.300 317.400C456.700 317.600 455.200 317 454 316.300C449 323 442 330 434 335Z" fill="#6b8aa3"/>
<path d="M419 261.600C425 261.300 431 264 434.500 269C437.400 273.500 438.700 280 438.400 286.300C438.200 291 436.600 295.200 434 298.800C431.900 301.900 429 305 426 307.200L422 303Z" fill="#6b8aa3"/>
<path d="M364.300 318.100c-1.600.5-1.300 2.800.6 2.700 5-.3 11-1.300 16.300-2.500l-.8-3.400c-5.100.8-11 1.900-16.100 3.200z" fill="#1b2935"/>
<path d="M404.700 261C398 261 392 264 389 268C383 275 379.500 283 378.500 291C377.400 300 378.300 310 380.400 317.500C382.600 325 386 331.500 390.800 336.600C396 342 403 345.300 410 345.300C416 345.300 422 344 427.300 341.800C432 339.600 436 336.500 439.400 333.100C444.400 328 449.500 322.500 453 316.600C451 318.500 448.500 320 446.400 321.500C443 324 439.500 327.300 436 329.700C431 325 427.500 320.500 425.600 315.800C424 312 422.700 308 422 303.600C426.400 301.200 429.900 298 431.600 293.600C433.400 289 433.800 284.800 433.300 281C432.600 275.300 430.800 271 428 268.200C424.600 264.800 419.800 263 415.100 263C411.500 261.600 408 261 404.700 261Z" fill="url(#bg1)"/>
<path d="M422 303.600C423 309 425 315 428 320.500C430.500 325 433.500 328.500 436.500 331L438.800 329.200C436 326 433.500 322.500 431.300 318.500C428.500 313.500 426.500 308 425.600 302.500Z" fill="#7593ab"/>
<path d="M419.900 269C421.800 269.400 423.600 270.600 425 272.600C427.600 275.600 429.200 279.200 429.300 282.800C429.400 286.500 428.900 290 427.600 293C426.400 296.400 424.400 300.200 421.900 303C420.800 291.800 420 280.500 419.900 269Z" fill="#cbe3f0"/>
<path d="M415.400 266L419.800 267C419.900 279.500 420.700 292 422 304L419.400 305.500C417.300 292.500 415.700 279.500 415.400 266Z" fill="#7391a9"/>
<path d="M398.300 271.200c1.300-1 3.300-.5 3.700 1.300.9 8 .5 18.600-.6 27.600-.6.600-1.500.5-1.900-.2-1.700-9-2.500-19.200-2-27.200.1-.7.400-1.200.8-1.500z" fill="#fff"/>
<circle cx="403.200" cy="309.900" r="2.400" fill="#fff"/>
<!-- lower circles -->
<circle cx="534.900" cy="419.400" r="43.700" fill="#74a0bb"/>
<circle cx="597.300" cy="420.300" r="43.600" fill="#6b808f"/>
<g fill="none" stroke="#e6f4fb" style="stroke-width:var(--rw,1.700)">
<ellipse cx="532.200" cy="424.900" rx="42.400" ry="39"/>
<ellipse cx="597.900" cy="420.900" rx="43.100" ry="39.100"/>
</g>
</symbol></defs><use href="#art" x="182" y="99.400" width="522.400" height="391.500"/></svg>
<div class="a" style="left:560.6px;top:334px;width:81.3px;height:28.7px;background:#eef3d9"></div>
<span class="t" style="left:564.30px;top:336.70px;font-size:12.3px;color:#222;transform:scale(0.9245,1.0000);">@nganhadayy</span>
<span class="t" style="left:564.30px;top:349.70px;font-size:12.3px;color:#222;transform:scale(1.0232,1.0000);">#hđ247</span>
<div class="a" style="left:707px;top:75.7px;width:15.4px;height:454.3px;background:#d3d6d8"></div>
<div class="a" style="left:708.2px;top:84.6px;width:12.8px;height:421px;background:linear-gradient(to right,#fafafa,#ececed);border:1px solid #b0b3b5;border-radius:3px"></div>
<div class="a" style="left:708.2px;top:242px;width:12.8px;height:106px;background:#c2c5c8;border:1px solid #a6a9ab;border-radius:3px"></div>
<svg class="a" style="left:710.6px;top:77.5px;" width="8" height="5" viewBox="0 0 8 5"><path d="M1 4.500l3-3.500 3 3.500z" fill="#c3c6c8"/></svg>
<svg class="a" style="left:710.6px;top:508px;" width="8" height="5" viewBox="0 0 8 5"><path d="M1 .5l3 3.500 3-3.500z" fill="#c3c6c8"/></svg>
<div class="a" style="left:178.8px;top:515.2px;width:528.2px;height:14.8px;background:#d3d6d8"></div>
<div class="a" style="left:188px;top:515.8px;width:525px;height:12.8px;background:linear-gradient(#fbfbfb,#ececed);border:1px solid #a9acae;border-radius:3px"></div>
<div class="a" style="left:385.8px;top:515.8px;width:130.2px;height:12.8px;background:#c2c5c8;border:1px solid #a6a9ab;border-radius:2px"></div>
<div class="a" style="left:180.5px;top:517px;width:6px;height:10.5px;background:#e2e4e5;border-radius:1px"></div>
<div class="a" style="left:178.8px;top:529px;width:544px;height:1.2px;background:#8a8d90"></div>
<div class="a" style="left:722.3px;top:58px;width:3.6px;height:472px;background:#595c60"></div>
<div class="a" style="left:725.8px;top:58px;width:298.2px;height:130px;background:#ced1d3"></div>
<div class="pt" style="left:725.8px;top:58px;width:298.2px;height:16.4px"></div><span class="t" style="left:845.50px;top:63.40px;font-size:10px;color:#2b2b2b;transform:scale(0.8409,0.8000);">Navigator</span><div class="pb" style="left:1000.700px;top:61.5px"><svg width="9.500" height="9.500" viewBox="0 0 9.500 9.500"><path d="M6.300 3.600H2.300v4.400h4.400V4.800M5 5.200l2.800-3M5.800 1.800h2.300v2.300" fill="none" stroke="#9a9d9f" stroke-width=".9"/></svg></div><div class="pb" style="left:1012.700px;top:61.5px"><svg width="9.500" height="9.500" viewBox="0 0 9.500 9.500"><path d="M2.400 2.400l4.700 4.700M7.100 2.400L2.400 7.100" fill="none" stroke="#9a9d9f" stroke-width="1.700"/></svg></div>
<div class="a b" style="left:728.2px;top:77.1px;width:19.4px;height:18.5px"><svg width="17.4" height="16.5" viewBox="0 0 17.4 16.5"><circle cx="7.200" cy="7" r="4.300" fill="#fcfcfc" stroke="#555" stroke-width="1.200"/><path d="M10.300 10.300l3.800 3.900" stroke="#555" stroke-width="1.900" stroke-linecap="round"/></svg></div>
<div class="a b" style="left:757px;top:77.1px;width:19.4px;height:18.5px"><svg width="17.4" height="16.5" viewBox="0 0 17.4 16.5"><circle cx="7.200" cy="7" r="4.300" fill="#fcfcfc" stroke="#555" stroke-width="1.200"/><path d="M10.300 10.300l3.800 3.900" stroke="#555" stroke-width="1.900" stroke-linecap="round"/><path d="M5 7h4.400M7.200 4.800v4.400" stroke="#555" stroke-width="1.200"/></svg></div>
<div class="a b" style="left:780.2px;top:77.1px;width:19.4px;height:18.5px"><svg width="17.4" height="16.5" viewBox="0 0 17.4 16.5"><rect x="2.800" y="3.800" width="11.400" height="9.400" fill="none" stroke="#555" stroke-width="1.100"/><g stroke="#666" stroke-width=".9" fill="none"><path d="M4.600 7.200V5.600h1.800M10.600 5.600h1.800v1.600M12.400 9.800v1.600h-1.800M6.400 11.400H4.600V9.800M4.800 5.800l2 1.600M12.200 5.800l-2 1.600M12.200 11.200l-2-1.600M4.800 11.200l2-1.600"/></g></svg></div>
<div class="a b" style="left:803.4px;top:77.1px;width:19.4px;height:18.5px"><svg width="17.4" height="16.5" viewBox="0 0 17.4 16.5"><circle cx="7.200" cy="7" r="4.300" fill="#fcfcfc" stroke="#555" stroke-width="1.200"/><path d="M10.300 10.300l3.800 3.900" stroke="#555" stroke-width="1.900" stroke-linecap="round"/><path d="M5 7h4.400" stroke="#555" stroke-width="1.200"/></svg></div>
<div class="a b" style="left:831.6px;top:77.1px;width:19.4px;height:18.5px"><svg width="17.4" height="16.5" viewBox="0 0 17.4 16.5"><g transform="translate(17,0) scale(-1,1)"><path d="M13.600 8.600a5.200 5.200 0 1 1-2-4.100" fill="none" stroke="#555" stroke-width="1.300"/><path d="M12.600 2.200l.2 3.600-3.500-.4z" fill="#555"/><rect x="5.300" y="6" width="6.400" height="5.200" fill="#555" transform="rotate(-18 8.500 8.600)"/></g></svg></div>
<div class="a b" style="left:854.9px;top:77.1px;width:19.4px;height:18.5px"><svg width="17.4" height="16.5" viewBox="0 0 17.4 16.5"><rect x="5" y="5.400" width="7" height="6.200" fill="#a3a5a7"/><g stroke="#b9bbbd" stroke-width=".9" fill="none"><path d="M2.600 3.200l2.200 2M14.400 3.200l-2.200 2M2.600 13.800l2.200-2M14.400 13.800l-2.200-2"/></g></svg></div>
<div class="a b" style="left:878px;top:77.1px;width:19.4px;height:18.5px"><svg width="17.4" height="16.5" viewBox="0 0 17.4 16.5"><g transform=""><path d="M13.600 8.600a5.200 5.200 0 1 1-2-4.100" fill="none" stroke="#555" stroke-width="1.300"/><path d="M12.600 2.200l.2 3.600-3.500-.4z" fill="#555"/><rect x="5.300" y="6" width="6.400" height="5.200" fill="#555" transform="rotate(-18 8.500 8.600)"/></g></svg></div>
<div class="a b" style="left:907px;top:77.1px;width:19.4px;height:18.5px"><svg width="17.4" height="16.5" viewBox="0 0 17.4 16.5"><path d="M7.600 3.200v11" stroke="#b5b7b9" stroke-width=".8"/><path d="M1.200 12.800V8.200l2.200-1.800 2.200 1.800v4.600z" fill="#555"/><rect x="9.800" y="6.600" width="4" height="6.200" fill="#fcfcfc" stroke="#555" stroke-width="1"/><path d="M3 4.600c1.600-3.600 6.600-3.600 8.400-.4" fill="none" stroke="#555" stroke-width="1"/><path d="M12.400 5.200l-2.600-.4 2-1.800z" fill="#555"/></svg></div>
<span class="t" style="left:734.68px;top:83.30px;font-size:5.8px;color:#333;font-weight:700;">1</span>
<div class="sep" style="left:752.2px;top:80.500px;height:11.500px;background:#9da0a2"></div>
<div class="sep" style="left:827.2px;top:80.500px;height:11.500px;background:#9da0a2"></div>
<div class="sep" style="left:902.2px;top:80.500px;height:11.500px;background:#9da0a2"></div>
<div class="a" style="left:725.8px;top:98.3px;width:298.2px;height:89.7px;background:#6b6e72"></div>
<svg class="a" style="left:817px;top:99px;--sw:6.500;--wc:#a9bccb" width="115.800" height="86.800"><use href="#art" width="115.800" height="86.800"/></svg>
<div class="a" style="left:817.1px;top:98.6px;width:2.2px;height:87.4px;background:#c5262c"></div>
<div class="a" style="left:931.4px;top:98.6px;width:2.1px;height:87.4px;background:#c5262c"></div>
<div class="a" style="left:725.8px;top:188px;width:298.2px;height:178.6px;background:#d7dadc"></div>
<div class="pt" style="border-top-color:#86bfe3;left:725.8px;top:188px;width:298.2px;height:17px"></div><span class="t" style="left:853.05px;top:193.70px;font-size:10px;color:#2b2b2b;transform:scale(0.8195,0.8000);">Layer</span><div class="pb" style="left:1000.700px;top:191.5px"><svg width="9.500" height="9.500" viewBox="0 0 9.500 9.500"><path d="M6.300 3.600H2.300v4.400h4.400V4.800M5 5.200l2.800-3M5.800 1.800h2.300v2.300" fill="none" stroke="#9a9d9f" stroke-width=".9"/></svg></div><div class="pb" style="left:1012.700px;top:191.5px"><svg width="9.500" height="9.500" viewBox="0 0 9.500 9.500"><path d="M2.400 2.400l4.700 4.700M7.100 2.400L2.400 7.100" fill="none" stroke="#9a9d9f" stroke-width="1.700"/></svg></div>
<span class="t" style="left:729.70px;top:212.42px;font-size:10px;color:#222;transform:scale(0.8111,0.8250);">Opacity</span>
<div class="a" style="left:805.2px;top:210.2px;width:174.2px;height:11.6px;background:linear-gradient(to right,#cde9f9,#179bf0);border:1px solid #686b6e"></div>
<span class="t" style="left:985.40px;top:212.42px;font-size:10px;color:#222;transform:scale(0.8110,0.8250);">100 %</span>
<span class="t" style="left:729.70px;top:231.82px;font-size:10px;color:#222;transform:scale(0.7656,0.8250);">Blending</span>
<div class="a" style="left:806px;top:227.3px;width:212.5px;height:16.2px;background:#fff;border:1px solid #9da0a2;border-radius:2px"></div>
<span class="t" style="left:808.80px;top:231.82px;font-size:10px;color:#222;transform:scale(0.7445,0.8250);">Normal</span>
<svg class="a" style="left:1009.5px;top:234.2px;" width="6" height="4" viewBox="0 0 6 4"><path d="M.5.500h5L3 3.500z" fill="#b5b7b9"/></svg>
<div class="chk" style="left:732.500px;top:251.200px"></div>
<svg class="a" style="left:732.5px;top:251.2px;" width="9.5" height="9.5" viewBox="0 0 9.5 9.5"><path d="M2.600 2.600l3.600 3.600M6.200 2.600L2.600 6.200" stroke="#777" stroke-width="1.300"/></svg>
<span class="t" style="left:746.20px;top:252.12px;font-size:10px;color:#222;transform:scale(0.8153,0.8250);">Protect Alpha</span>
<div class="chk" style="left:830.600px;top:251.200px"></div>
<span class="t" style="left:844.70px;top:252.12px;font-size:10px;color:#222;transform:scale(0.7526,0.8250);">Clipping</span>
<div class="chk" style="left:927.800px;top:251.200px"></div>
<span class="t" style="left:942.00px;top:252.12px;font-size:10px;color:#222;transform:scale(0.7337,0.8250);">Lock</span>
<div class="a" style="left:727px;top:265.7px;width:280.4px;height:76px;background:#fff;border:1px solid #55585b;border-bottom:none"></div>
<div class="a" style="left:741.4px;top:266.7px;width:265px;height:29.7px;background:#7ccbf5"></div>
<div class="a" style="left:741px;top:265.7px;width:1px;height:76px;background:#6a6d70"></div>
<div class="a" style="left:727px;top:295.9px;width:280.4px;height:1.1px;background:#55585b"></div>
<div class="a" style="left:727px;top:326.2px;width:280.4px;height:1.1px;background:#55585b"></div>
<svg class="a" style="left:752px;top:271.2px;" width="28" height="20" viewBox="0 0 28 20"><defs><pattern id="ck" width="6" height="6" patternUnits="userSpaceOnUse"><rect width="6" height="6" fill="#fff"/><rect width="3" height="3" fill="#e2e3e4"/><rect x="3" y="3" width="3" height="3" fill="#e2e3e4"/></pattern></defs><rect x=".5" y=".5" width="27" height="19" fill="url(#ck)" stroke="#c9cccf" stroke-width="1"/><path d="M12.500 8.500c1.500-.3 2.300 1 2 2.600-.3 1.500-1.500 2.400-2.800 2-1-.500-1-2.800.8-4.600z" fill="#1d2f3d"/><circle cx="13.200" cy="6" r=".7" fill="#4b7291"/></svg>
<svg class="a" style="left:730.2px;top:277.5px;" width="8" height="8" viewBox="0 0 8 8"><circle cx="4" cy="4" r="3" fill="#d0d2d4" stroke="#b3b5b7" stroke-width="1"/></svg>
<svg class="a" style="left:752px;top:301.4px;" width="28" height="20" viewBox="0 0 28 20"><defs><pattern id="ck" width="6" height="6" patternUnits="userSpaceOnUse"><rect width="6" height="6" fill="#fff"/><rect width="3" height="3" fill="#e2e3e4"/><rect x="3" y="3" width="3" height="3" fill="#e2e3e4"/></pattern></defs><rect x=".5" y=".5" width="27" height="19" fill="url(#ck)" stroke="#c9cccf" stroke-width="1"/><circle cx="5.500" cy="4.600" r="2.600" fill="#a6cbe2"/><circle cx="8.800" cy="4.600" r="2.600" fill="#3f7aa3"/><path d="M12.500 8.500c1.500-.3 2.300 1 2 2.600-.3 1.500-1.500 2.400-2.800 2-1-.500-1-2.800.8-4.600z" fill="#1d2f3d"/><circle cx="18.800" cy="15.400" r="2.600" fill="#5f8fae"/><circle cx="22" cy="15.400" r="2.600" fill="#4f6473"/></svg>
<svg class="a" style="left:730.2px;top:307.7px;" width="8" height="8" viewBox="0 0 8 8"><circle cx="4" cy="4" r="3" fill="#d0d2d4" stroke="#b3b5b7" stroke-width="1"/></svg>
<div class="a" style="left:752px;top:331.6px;width:28px;height:10px;background:#c5e0ef;border:1px solid #b9bcbe;border-bottom:none"></div>
<svg class="a" style="left:730.2px;top:337.8px;" width="8" height="4" viewBox="0 0 8 4"><circle cx="4" cy="4" r="3" fill="#d0d2d4" stroke="#b3b5b7" stroke-width="1"/></svg>
<span class="t" style="left:791.90px;top:277.24px;font-size:10px;color:#0c1a24;font-weight:700;transform:scale(1.0357,0.8375);">Layer2</span>
<span class="t" style="left:791.90px;top:307.21px;font-size:10px;color:#222;transform:scale(0.9124,0.8125);">Layer2</span>
<div class="a" style="left:791.300px;top:336.500px;width:40px;height:5.200px;overflow:hidden"><span class="t" style="left:0.60px;top:0.71px;font-size:10px;color:#222;transform:scale(0.9124,0.8125);">Layer1</span></div>
<svg class="a" style="left:990px;top:274px;" width="15" height="15" viewBox="0 0 15 15"><polygon points="14.07,7.02 14.07,8.18 12.09,8.83 11.81,9.61 12.91,11.39 12.17,12.27 10.23,11.49 9.51,11.91 9.21,13.98 8.08,14.17 7.09,12.33 6.27,12.19 4.71,13.58 3.71,13.01 4.14,10.96 3.61,10.33 1.52,10.39 1.12,9.31 2.77,8.01 2.77,7.19 1.12,5.89 1.52,4.81 3.61,4.87 4.14,4.24 3.71,2.19 4.71,1.62 6.27,3.01 7.09,2.87 8.08,1.03 9.21,1.22 9.51,3.29 10.23,3.71 12.17,2.93 12.91,3.81 11.81,5.59 12.09,6.37" fill="#fff"/><circle cx="7.5" cy="7.6" r="1.98" fill="#7ccbf5"/></svg>
<div class="a" style="left:1009.6px;top:275px;width:13.2px;height:58px;background:linear-gradient(to right,#fafafa,#e9eaeb);border:1px solid #b0b3b5;border-radius:3px"></div>
<div class="a" style="left:1009.6px;top:275px;width:13.2px;height:50px;background:#c2c5c8;border:1px solid #a6a9ab;border-radius:3px"></div>
<svg class="a" style="left:1012.2px;top:268.5px;" width="8" height="5" viewBox="0 0 8 5"><path d="M1 4.500l3-3.500 3 3.500z" fill="#c6c9cb"/></svg>
<svg class="a" style="left:1012.2px;top:335px;" width="8" height="5" viewBox="0 0 8 5"><path d="M1 .5l3 3.500 3-3.500z" fill="#c6c9cb"/></svg>
<div class="a" style="left:725.8px;top:341.6px;width:298.2px;height:25px;background:#c4c8cb"></div>
<div class="a b" style="left:730.4px;top:343.9px;width:18.8px;height:18.6px"><svg width="16.8" height="16.6" viewBox="0 0 16.8 16.6"><path d="M4 2.800h6l3 3v8.600H4z" fill="#fcfcfc" stroke="#666" stroke-width="1"/><path d="M10 2.800v3h3" fill="none" stroke="#666" stroke-width=".9"/></svg></div>
<div class="a b" style="left:753.6px;top:343.9px;width:18.8px;height:18.6px"><svg width="16.8" height="16.6" viewBox="0 0 16.8 16.6"><path d="M4 2.800h6l3 3v8.600H4z" fill="#fcfcfc" stroke="#666" stroke-width="1"/></svg></div>
<div class="a b" style="left:777px;top:343.9px;width:18.8px;height:18.6px"><svg width="16.8" height="16.6" viewBox="0 0 16.8 16.6"><path d="M4 2.800h6l3 3v8.600H4z" fill="#fcfcfc" stroke="#666" stroke-width="1"/></svg></div>
<div class="a bf" style="left:799.6px;top:343.9px;width:23.6px;height:18.6px"><svg width="21.6" height="16.6" viewBox="0 0 21.6 16.6"><path d="M3 2.800h5.400l2.600 2.600v7.800H3z" fill="#fcfcfc" stroke="#777" stroke-width="1"/><path d="M9 11.400h5M11.500 9v5" stroke="#555" stroke-width="1.300"/><path d="M15.500 7.600h4.600l-2.300 2.600z" fill="#555"/></svg></div>
<div class="a b" style="left:826.9px;top:343.9px;width:18.8px;height:18.6px"><svg width="16.8" height="16.6" viewBox="0 0 16.8 16.6"><path d="M2.800 4h5l1.400 1.600h5.800v8.800H2.800z" fill="#555"/></svg></div>
<div class="a b" style="left:855.1px;top:343.9px;width:18.8px;height:18.6px"><svg width="16.8" height="16.6" viewBox="0 0 16.8 16.6"><rect x="3.400" y="5.600" width="7.600" height="7.600" fill="#fcfcfc" stroke="#666" stroke-width="1"/><rect x="6" y="3.200" width="7.600" height="7.600" fill="#fcfcfc" stroke="#666" stroke-width="1"/></svg></div>
<div class="a b" style="left:878.7px;top:343.9px;width:18.8px;height:18.6px"><svg width="16.8" height="16.6" viewBox="0 0 16.8 16.6"><rect x="3" y="3.400" width="4" height="4" fill="none" stroke="#555" stroke-width="1"/><rect x="3" y="10" width="4" height="4" fill="none" stroke="#555" stroke-width="1"/><path d="M7.400 5.400h2.200v6.600H7.400M9.600 8.600h2" fill="none" stroke="#555" stroke-width=".9"/><rect x="11.400" y="6.400" width="3.800" height="4.200" fill="#555"/></svg></div>
<div class="a b" style="left:907px;top:343.9px;width:18.8px;height:18.6px"><svg width="16.8" height="16.6" viewBox="0 0 16.8 16.6"><path d="M3.600 5h9.800M6.600 4.800V3.400h3.800v1.400" fill="none" stroke="#444" stroke-width="1.400"/><path d="M4.600 6.400h7.800v7.800H4.600z" fill="none" stroke="#444" stroke-width="1.300"/><path d="M7.200 7v6.600M9.800 7v6.600" stroke="#444" stroke-width="1.200"/></svg></div>
<span class="t" style="left:761.10px;top:349.70px;font-size:10px;color:#555;transform:scale(0.7191,0.7000);">8</span>
<span class="t" style="left:785.00px;top:349.70px;font-size:10px;color:#555;transform:scale(0.5393,0.7000);">1</span>
<div class="sep" style="left:850px;top:348px;height:10px;background:#9da0a2"></div>
<div class="sep" style="left:902px;top:348px;height:10px;background:#9da0a2"></div>
<div class="a" style="left:725.8px;top:366.6px;width:298.2px;height:3.5px;background:#595c60"></div>
<div class="a" style="left:725.8px;top:370px;width:298.2px;height:160px;background:#ececec"></div>
<div class="pt" style="left:725.8px;top:370px;width:298.2px;height:16.4px"></div><span class="t" style="left:844.55px;top:375.40px;font-size:10px;color:#2b2b2b;transform:scale(0.7754,0.8000);">Brush Size</span><div class="pb" style="left:1000.700px;top:373.5px"><svg width="9.500" height="9.500" viewBox="0 0 9.500 9.500"><path d="M6.300 3.600H2.300v4.400h4.400V4.800M5 5.200l2.800-3M5.800 1.800h2.300v2.300" fill="none" stroke="#9a9d9f" stroke-width=".9"/></svg></div><div class="pb" style="left:1012.700px;top:373.5px"><svg width="9.500" height="9.500" viewBox="0 0 9.500 9.500"><path d="M2.400 2.400l4.700 4.700M7.100 2.400L2.400 7.100" fill="none" stroke="#9a9d9f" stroke-width="1.700"/></svg></div>
<svg class="a" style="left:0;top:0" width="1024" height="547" viewBox="0 0 1024 547"><rect x="726.200" y="387" width="269.28" height="36.700" fill="#fff"/><path d="M756.12 387v36.700" stroke="#e3e3e3" stroke-width=".8" stroke-dasharray="1 1"/><path d="M786.04 387v36.700" stroke="#e3e3e3" stroke-width=".8" stroke-dasharray="1 1"/><path d="M815.96 387v36.700" stroke="#e3e3e3" stroke-width=".8" stroke-dasharray="1 1"/><path d="M845.88 387v36.700" stroke="#e3e3e3" stroke-width=".8" stroke-dasharray="1 1"/><path d="M875.8 387v36.700" stroke="#e3e3e3" stroke-width=".8" stroke-dasharray="1 1"/><path d="M905.72 387v36.700" stroke="#e3e3e3" stroke-width=".8" stroke-dasharray="1 1"/><path d="M935.64 387v36.700" stroke="#e3e3e3" stroke-width=".8" stroke-dasharray="1 1"/><path d="M965.56 387v36.700" stroke="#e3e3e3" stroke-width=".8" stroke-dasharray="1 1"/><circle cx="740.7" cy="401.7" r="0.2" fill="#8a8a8a"/><circle cx="770.66" cy="401.7" r="0.35" fill="#8a8a8a"/><circle cx="800.62" cy="401.7" r="0.55" fill="#1c1c1c"/><circle cx="830.58" cy="401.7" r="0.8" fill="#1c1c1c"/><circle cx="860.54" cy="401.7" r="1.15" fill="#1c1c1c"/><circle cx="890.5" cy="401.7" r="1.45" fill="#1c1c1c"/><circle cx="920.46" cy="401.7" r="2.3" fill="#1c1c1c"/><circle cx="950.42" cy="401.7" r="3.3" fill="#1c1c1c"/><circle cx="980.38" cy="401.7" r="4.1" fill="#1c1c1c"/><rect x="726.200" y="424.2" width="269.28" height="36.700" fill="#fff"/><path d="M756.12 424.2v36.700" stroke="#e3e3e3" stroke-width=".8" stroke-dasharray="1 1"/><path d="M786.04 424.2v36.700" stroke="#e3e3e3" stroke-width=".8" stroke-dasharray="1 1"/><path d="M815.96 424.2v36.700" stroke="#e3e3e3" stroke-width=".8" stroke-dasharray="1 1"/><path d="M845.88 424.2v36.700" stroke="#e3e3e3" stroke-width=".8" stroke-dasharray="1 1"/><path d="M875.8 424.2v36.700" stroke="#e3e3e3" stroke-width=".8" stroke-dasharray="1 1"/><path d="M905.72 424.2v36.700" stroke="#e3e3e3" stroke-width=".8" stroke-dasharray="1 1"/><path d="M935.64 424.2v36.700" stroke="#e3e3e3" stroke-width=".8" stroke-dasharray="1 1"/><path d="M965.56 424.2v36.700" stroke="#e3e3e3" stroke-width=".8" stroke-dasharray="1 1"/><circle cx="740.7" cy="439.4" r="5.5" fill="#1c1c1c"/><circle cx="770.66" cy="439.4" r="7.4" fill="#1c1c1c"/><circle cx="800.62" cy="439.4" r="9.15" fill="#1c1c1c"/><circle cx="830.58" cy="439.4" r="10.4" fill="#1c1c1c"/><circle cx="860.54" cy="439.4" r="10.4" fill="#1c1c1c"/><circle cx="890.5" cy="439.4" r="10.4" fill="#1c1c1c"/><circle cx="920.46" cy="439.4" r="10.4" fill="#1c1c1c"/><circle cx="950.42" cy="439.4" r="10.4" fill="#1c1c1c"/><circle cx="980.38" cy="439.4" r="10.4" fill="#1c1c1c"/><rect x="726.200" y="461.4" width="179.52" height="36.700" fill="#fff"/><path d="M756.12 461.4v36.700" stroke="#e3e3e3" stroke-width=".8" stroke-dasharray="1 1"/><path d="M786.04 461.4v36.700" stroke="#e3e3e3" stroke-width=".8" stroke-dasharray="1 1"/><path d="M815.96 461.4v36.700" stroke="#e3e3e3" stroke-width=".8" stroke-dasharray="1 1"/><path d="M845.88 461.4v36.700" stroke="#e3e3e3" stroke-width=".8" stroke-dasharray="1 1"/><path d="M875.8 461.4v36.700" stroke="#e3e3e3" stroke-width=".8" stroke-dasharray="1 1"/><circle cx="740.7" cy="476.6" r="10.4" fill="#1c1c1c"/><circle cx="770.66" cy="476.6" r="10.4" fill="#1c1c1c"/><circle cx="800.62" cy="476.6" r="10.4" fill="#1c1c1c"/><circle cx="830.58" cy="476.6" r="10.4" fill="#1c1c1c"/><circle cx="860.54" cy="476.6" r="10.4" fill="#1c1c1c"/><circle cx="890.5" cy="476.6" r="10.4" fill="#1c1c1c"/></svg>
<span class="t" style="left:739.43px;top:415.43px;font-size:9px;color:#111;transform:scale(0.5084,0.8667);">1</span>
<span class="t" style="left:766.51px;top:415.43px;font-size:9px;color:#111;transform:scale(0.6632,0.8667);">1.5</span>
<span class="t" style="left:798.95px;top:415.43px;font-size:9px;color:#111;transform:scale(0.6679,0.8667);">2</span>
<span class="t" style="left:828.91px;top:415.43px;font-size:9px;color:#111;transform:scale(0.6679,0.8667);">3</span>
<span class="t" style="left:858.87px;top:415.43px;font-size:9px;color:#111;transform:scale(0.6679,0.8667);">4</span>
<span class="t" style="left:888.83px;top:415.43px;font-size:9px;color:#111;transform:scale(0.6679,0.8667);">5</span>
<span class="t" style="left:918.79px;top:415.43px;font-size:9px;color:#111;transform:scale(0.6679,0.8667);">7</span>
<span class="t" style="left:947.07px;top:415.43px;font-size:9px;color:#111;transform:scale(0.6690,0.8667);">10</span>
<span class="t" style="left:977.03px;top:415.43px;font-size:9px;color:#111;transform:scale(0.6690,0.8667);">12</span>
<span class="t" style="left:737.35px;top:452.63px;font-size:9px;color:#111;transform:scale(0.6690,0.8667);">15</span>
<span class="t" style="left:767.31px;top:452.63px;font-size:9px;color:#111;transform:scale(0.6690,0.8667);">20</span>
<span class="t" style="left:797.27px;top:452.63px;font-size:9px;color:#111;transform:scale(0.6690,0.8667);">25</span>
<span class="t" style="left:827.23px;top:452.63px;font-size:9px;color:#111;transform:scale(0.6690,0.8667);">30</span>
<span class="t" style="left:857.19px;top:452.63px;font-size:9px;color:#111;transform:scale(0.6690,0.8667);">40</span>
<span class="t" style="left:887.15px;top:452.63px;font-size:9px;color:#111;transform:scale(0.6690,0.8667);">50</span>
<span class="t" style="left:917.11px;top:452.63px;font-size:9px;color:#111;transform:scale(0.6690,0.8667);">70</span>
<span class="t" style="left:945.40px;top:452.63px;font-size:9px;color:#111;transform:scale(0.6686,0.8667);">100</span>
<span class="t" style="left:975.36px;top:452.63px;font-size:9px;color:#111;transform:scale(0.6686,0.8667);">150</span>
<span class="t" style="left:735.68px;top:489.83px;font-size:9px;color:#111;transform:scale(0.6686,0.8667);">200</span>
<span class="t" style="left:765.64px;top:489.83px;font-size:9px;color:#111;transform:scale(0.6686,0.8667);">300</span>
<span class="t" style="left:795.60px;top:489.83px;font-size:9px;color:#111;transform:scale(0.6686,0.8667);">400</span>
<span class="t" style="left:825.56px;top:489.83px;font-size:9px;color:#111;transform:scale(0.6686,0.8667);">500</span>
<span class="t" style="left:855.52px;top:489.83px;font-size:9px;color:#111;transform:scale(0.6686,0.8667);">700</span>
<span class="t" style="left:883.80px;top:489.83px;font-size:9px;color:#111;transform:scale(0.6690,0.8667);">1000</span>
<div class="a" style="left:1009.4px;top:395px;width:13.6px;height:126.5px;background:#c0c3c6;border:1px solid #8e9194;border-radius:3px"></div>
<svg class="a" style="left:1012.2px;top:388.5px;" width="8" height="5" viewBox="0 0 8 5"><path d="M1 4.500l3-3.500 3 3.500z" fill="#d4d6d8"/></svg>
<svg class="a" style="left:1012.2px;top:523px;" width="8" height="5" viewBox="0 0 8 5"><path d="M1 .5l3 3.500 3-3.500z" fill="#d4d6d8"/></svg>
</body></html>
